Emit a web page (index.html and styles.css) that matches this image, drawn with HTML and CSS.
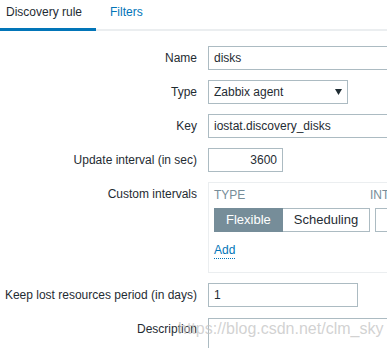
FILE: index.html
```html
<!DOCTYPE html>
<html lang="en">
<head>
    <meta charset="UTF-8">
    <meta name="viewport" content="width=device-width, initial-scale=1.0">
    <title>Discovery rule</title>
    <link rel="stylesheet" href="styles.css">
</head>
<body>
    <ul class="tabs">
        <li class="tab tab-active">Discovery rule</li>
        <li class="tab"><a href="#">Filters</a></li>
    </ul>

    <div class="form-grid">
        <label class="form-label">Name</label>
        <div class="form-field"><input class="input input-wide" type="text" value="disks"></div>

        <label class="form-label">Type</label>
        <div class="form-field">
            <div class="select">
                <span>Zabbix agent</span>
                <svg class="select-arrow" width="7" height="6" viewBox="0 0 7 6"><path d="M0 0 H7 L3.5 6 Z" fill="#1f2c33"/></svg>
            </div>
        </div>

        <label class="form-label">Key</label>
        <div class="form-field"><input class="input input-wide" type="text" value="iostat.discovery_disks"></div>

        <label class="form-label">Update interval (in sec)</label>
        <div class="form-field"><input class="input input-num" type="text" value="3600"></div>

        <label class="form-label">Custom intervals</label>
        <div class="form-field">
            <div class="intervals">
                <div class="intervals-head">
                    <span class="col-type">Type</span>
                    <span>Interval</span>
                </div>
                <div class="intervals-row">
                    <div class="segmented">
                        <span class="seg seg-on">Flexible</span>
                        <span class="seg">Scheduling</span>
                    </div>
                    <input class="input input-interval" type="text" value="">
                </div>
                <a class="link-action" href="#">Add</a>
            </div>
        </div>

        <label class="form-label">Keep lost resources period (in days)</label>
        <div class="form-field"><input class="input input-mid" type="text" value="1"></div>

        <label class="form-label">Description</label>
        <div class="form-field"><textarea class="input textarea"></textarea></div>
    </div>

    <div class="watermark">https://blog.csdn.net/clm_sky</div>
</body>
</html>
```

FILE: styles.css
```css
:root {
    --text-color: #1f2c33;
    --link-color: #0275b8;
    --border-color: #acbbc2;
    --light-border: #ebeef0;
    --muted-color: #768d99;
}

html, body {
    overflow: hidden;
}

body {
    margin: 0;
    background: #fff;
    color: var(--text-color);
    font-family: "Liberation Sans", Arial, sans-serif;
    font-size: 12px;
    position: relative;
    height: 348px;
}

.tabs {
    display: flex;
    margin: 0 0 0 -8px;
    padding: 0;
    list-style: none;
    height: 29px;
    border-bottom: 2px solid var(--light-border);
}

.tab {
    padding: 0 14px 4px;
    line-height: 24px;
    height: 24px;
}

.tab a {
    color: var(--link-color);
    text-decoration: none;
}

.tab-active {
    border-bottom: 3px solid var(--link-color);
}

.form-grid {
    display: grid;
    grid-template-columns: 197px 1fr;
    column-gap: 11px;
    row-gap: 10px;
    padding-top: 15px;
}

.form-label {
    display: flex;
    justify-content: flex-end;
    white-space: nowrap;
    line-height: 24px;
}

.form-field {
    display: flex;
    align-items: flex-start;
}

.input {
    box-sizing: border-box;
    height: 24px;
    border: 1px solid var(--border-color);
    padding: 0 5px;
    font-family: inherit;
    font-size: 12px;
    color: var(--text-color);
    background: #fff;
    margin: 0;
    flex-shrink: 0;
}

.input-wide {
    width: 453px;
}

.input-num {
    width: 75px;
    text-align: right;
}

.input-mid {
    width: 150px;
}

.textarea {
    width: 453px;
    height: 70px;
    resize: none;
    margin-top: 1px;
}

.select {
    box-sizing: border-box;
    width: 140px;
    height: 24px;
    border: 1px solid var(--border-color);
    padding: 0 5px 0 5px;
    display: flex;
    align-items: center;
    justify-content: space-between;
}

.intervals {
    box-sizing: border-box;
    width: 453px;
    flex-shrink: 0;
    border: 1px solid var(--light-border);
    padding: 5px 5px 13px;
}

.intervals-head {
    display: flex;
    line-height: 14px;
    color: var(--muted-color);
    text-transform: uppercase;
    padding-bottom: 6px;
}

.col-type {
    width: 156px;
}

.intervals-row {
    display: flex;
    gap: 5px;
    margin-bottom: 10px;
}

.segmented {
    display: flex;
}

.seg {
    box-sizing: border-box;
    height: 24px;
    line-height: 22px;
    padding: 0 11px;
    font-size: 13px;
    border: 1px solid var(--border-color);
    background: #fff;
}

.seg + .seg {
    border-left: 0;
}

.seg-on {
    background: var(--muted-color);
    border-color: var(--muted-color);
    color: #fff;
}

.input-interval {
    width: 120px;
}

.link-action {
    display: inline-block;
    line-height: 16px;
    color: var(--link-color);
    text-decoration: none;
    border-bottom: 1px dotted var(--link-color);
}

.watermark {
    position: absolute;
    left: 178px;
    top: 320px;
    font-size: 16px;
    line-height: 18px;
    color: rgba(195, 195, 195, 0.75);
    white-space: nowrap;
}
```
